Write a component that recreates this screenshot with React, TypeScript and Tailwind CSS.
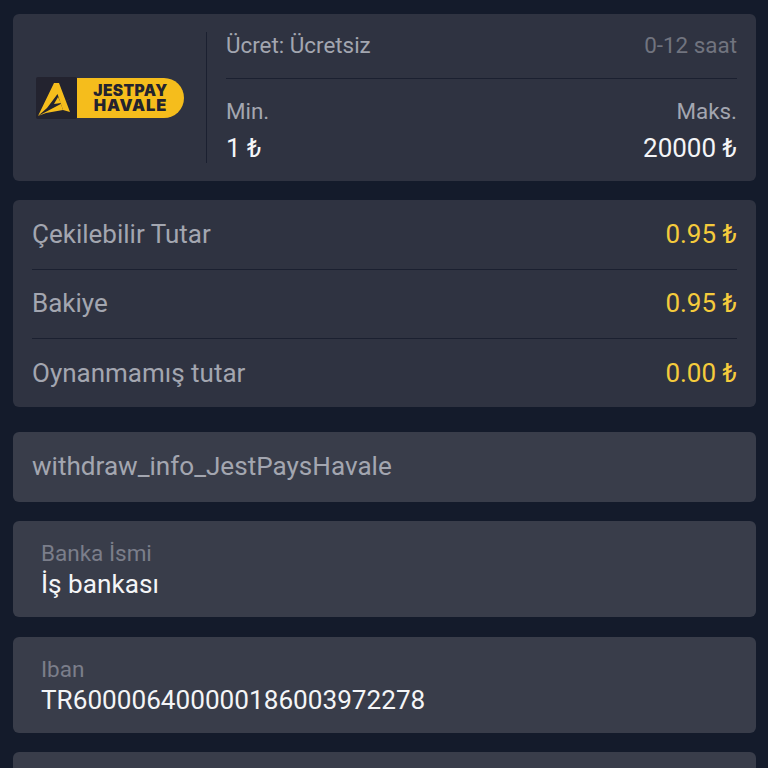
export default function App() {
  const row = "flex items-center justify-between h-[69px] pb-[2px] border-b border-[#1b2030] last:border-b-0 last:h-[68px] last:pb-0";
  const field = "h-[96px] shrink-0 rounded-md bg-[#393d4a] pl-[28px] pt-[20px]";
  return (
    <div className="h-[768px] w-[768px] overflow-hidden bg-[#141b2b] pl-[13px] pr-[12px] pt-[14px] font-['Roboto',sans-serif]">
      <div className="flex h-[167px] rounded-md bg-[#2f3341] pl-[23px] pr-[19px] pt-[17px]">
        <div className="mt-px flex h-[131px] w-[171px] shrink-0 items-center border-r border-[#1b2030]">
          <div className="flex h-[42px] items-center">
            <div className="flex h-[42px] w-[41px] items-center justify-center rounded-[2px] bg-[#23232f]">
              <svg width="41" height="42" viewBox="0 0 41 42">
                <path d="M2 39 L18 6 L23 6 L34 35 L27 33 L21.5 17 L11 31 Z" fill="#f5bd1c" />
                <path d="M2 39 L38 20 L25 27 L27 33 L10 36 Z" fill="#f5bd1c" />
                <path d="M22 20 L25 26 L18 27 Z" fill="#f5bd1c" />
              </svg>
            </div>
            <div className="flex h-[40px] w-[107px] flex-col items-center justify-center rounded-r-[20px] bg-[#f5bd1c] font-['Inter',sans-serif] font-black leading-[14px] text-[#23232f]">
              <span className="text-[15.5px] tracking-[0.4px]">JESTPAY</span>
              <span className="text-[16.5px] tracking-[0.9px]">HAVALE</span>
            </div>
          </div>
        </div>
        <div className="flex min-w-0 flex-1 flex-col pl-[19px]">
          <div className="flex h-[29px] items-center justify-between text-[22.4px]">
            <span className="text-[#a3a6b0]">Ücret: Ücretsiz</span>
            <span className="text-[#71747f]">0-12 saat</span>
          </div>
          <div className="mt-[18px] h-px bg-[#1b2030]" />
          <div className="mt-[18px] flex justify-between text-[22.4px] leading-[28px] text-[#a3a6b0]">
            <span>Min.</span>
            <span>Maks.</span>
          </div>
          <div className="mt-[8px] flex justify-between text-[26px] leading-[30px] text-[#f4f5f7]">
            <span>1 ₺</span>
            <span>20000 ₺</span>
          </div>
        </div>
      </div>

      <div className="mt-[19px] rounded-md bg-[#2f3341] px-[19px] pt-px text-[26px] text-[#a3a6b0]">
        <div className={row}>
          <span>Çekilebilir Tutar</span>
          <span className="text-[#f5cb3c]">0.95 ₺</span>
        </div>
        <div className={row}>
          <span>Bakiye</span>
          <span className="text-[#f5cb3c]">0.95 ₺</span>
        </div>
        <div className={row}>
          <span>Oynanmamış tutar</span>
          <span className="text-[#f5cb3c]">0.00 ₺</span>
        </div>
      </div>

      <div className="mt-[25px] flex h-[70px] items-center rounded-md bg-[#393d4a] px-[19px] text-[26.1px] text-[#a3a6b0]">
        withdraw_info_JestPaysHavale
      </div>

      <div className={`mt-[19px] ${field}`}>
        <div className="text-[22.5px] leading-[24px] text-[#7b7e8a]">Banka İsmi</div>
        <div className="mt-[4px] text-[26.15px] leading-[30px] text-[#f4f5f7]">İş bankası</div>
      </div>

      <div className={`mt-[20px] ${field}`}>
        <div className="text-[22.5px] leading-[24px] text-[#7b7e8a]">Iban</div>
        <div className="mt-[4px] text-[26.15px] leading-[30px] text-[#f4f5f7]">TR600006400000186003972278</div>
      </div>

      <div className="mt-[19px] h-[96px] rounded-md bg-[#393d4a]" />
    </div>
  );
}
